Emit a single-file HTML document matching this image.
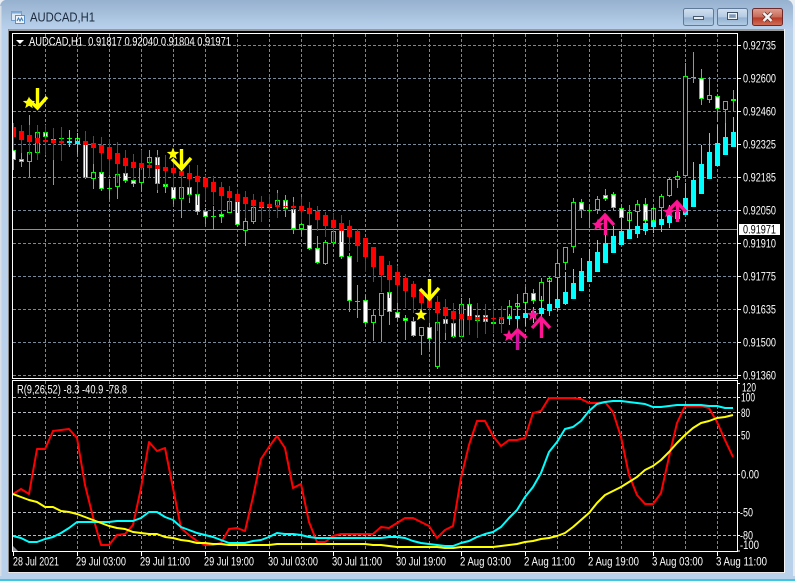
<!DOCTYPE html>
<html><head><meta charset="utf-8"><title>AUDCAD,H1</title>
<style>html,body{margin:0;padding:0;background:#b9d1ea;width:795px;height:581px;overflow:hidden}svg{display:block}text{font-family:"Liberation Sans",sans-serif;font-size:11.5px;fill:#fff;white-space:pre}</style></head>
<body>
<svg xmlns="http://www.w3.org/2000/svg" width="795" height="581" viewBox="0 0 795 581">
<defs>
<linearGradient id="tb" x1="0" y1="0" x2="0" y2="1"><stop offset="0" stop-color="#96b1cf"/><stop offset="1" stop-color="#bad2ec"/></linearGradient>
<linearGradient id="bt" x1="0" y1="0" x2="0" y2="1"><stop offset="0" stop-color="#d2e0ee"/><stop offset=".5" stop-color="#b4cbe3"/><stop offset=".55" stop-color="#93b1cf"/><stop offset="1" stop-color="#b4cde6"/></linearGradient>
<linearGradient id="cl" x1="0" y1="0" x2="0" y2="1"><stop offset="0" stop-color="#e0a090"/><stop offset=".5" stop-color="#c86a58"/><stop offset=".55" stop-color="#b83a26"/><stop offset="1" stop-color="#d0705a"/></linearGradient>
<clipPath id="mc"><rect x="13" y="34" width="724" height="344"/></clipPath>
<clipPath id="sc"><rect x="13" y="381" width="724" height="170"/></clipPath>
</defs>
<rect width="795" height="581" fill="#b9d1ea"/>
<rect width="795" height="30" fill="url(#tb)"/>
<path d="M0 0H5Q1 1 0 6Z" fill="#e8eef4"/><path d="M795 0H788Q792 1 793 6V30H795Z" fill="#e8eef4"/>
<rect x="0" y="6" width="1.5" height="570" fill="#d8dfe6"/>
<rect x="793" y="6" width="2" height="570" fill="#e4eaf0"/>
<rect x="0" y="579" width="795" height="2" fill="#3cc8e0"/>
<rect x="8" y="29" width="777" height="544" fill="#000"/>
<rect x="8" y="29" width="777" height="2" fill="#9a9a9a"/>
<rect x="8" y="29" width="1" height="544" fill="#888"/>
<rect x="8" y="572" width="777" height="1" fill="#e8e8e8"/>
<rect x="784" y="29" width="1" height="544" fill="#f2f5f8"/>

<!-- title icon -->
<rect x="11.5" y="11.5" width="10" height="9" fill="#dbe9f7" stroke="#6f9bc8"/>
<rect x="11.5" y="11.5" width="10" height="2" fill="#7fa8d4"/>
<rect x="15.5" y="15.5" width="9" height="8" fill="#eef5fc" stroke="#5c8fc4"/>
<path d="M17 21l1.5-3 1.5 3 1.5-3 1.5 3" fill="none" stroke="#3f79b8"/>
<text x="30" y="21.5" textLength="65" lengthAdjust="spacingAndGlyphs" style="font-size:13px;fill:#1b2a3d">AUDCAD,H1</text>

<!-- buttons -->
<rect x="683.5" y="8.5" width="30" height="17" rx="2" fill="url(#bt)" stroke="#5f7a99"/>
<rect x="717.5" y="8.5" width="30" height="17" rx="2" fill="url(#bt)" stroke="#5f7a99"/>
<rect x="752.5" y="8.5" width="30" height="17" rx="2" fill="url(#cl)" stroke="#6e2a2a"/>
<rect x="693.5" y="16.5" width="10" height="3" fill="#e8eef4" stroke="#47586c"/>
<rect x="727.5" y="12.5" width="10" height="7" fill="none" stroke="#3e5066" stroke-width="1"/><rect x="728.5" y="13.5" width="8" height="5" fill="none" stroke="#eef3f8" stroke-width="1"/><rect x="729.5" y="14.5" width="6" height="3" fill="#7e97b2"/>
<path d="M763.5 13l8 8M771.5 13l-8 8" stroke="#5a2a24" stroke-width="4"/><path d="M763.5 13l8 8M771.5 13l-8 8" stroke="#f2f2f2" stroke-width="2.6"/>

<!-- grid -->
<g shape-rendering="crispEdges" fill="none" stroke-width="1">
<path stroke="#778899" stroke-dasharray="3 2" d="M13 45.5H737M13 78.5H737M13 111.5H737M13 144.5H737M13 177.5H737M13 210.5H737M13 243.5H737M13 276.5H737M13 309.5H737M13 342.5H737M13 375.5H737"/>
<path stroke="#778899" stroke-dasharray="3 2" d="M45.5 34V378M77.5 34V378M109.5 34V378M141.5 34V378M173.5 34V378M205.5 34V378M237.5 34V378M269.5 34V378M301.5 34V378M333.5 34V378M365.5 34V378M397.5 34V378M429.5 34V378M461.5 34V378M493.5 34V378M525.5 34V378M557.5 34V378M589.5 34V378M621.5 34V378M653.5 34V378M685.5 34V378M717.5 34V378"/>
<path stroke="#778899" stroke-dasharray="3 2" d="M45.5 381V551M77.5 381V551M109.5 381V551M141.5 381V551M173.5 381V551M205.5 381V551M237.5 381V551M269.5 381V551M301.5 381V551M333.5 381V551M365.5 381V551M397.5 381V551M429.5 381V551M461.5 381V551M493.5 381V551M525.5 381V551M557.5 381V551M589.5 381V551M621.5 381V551M653.5 381V551M685.5 381V551M717.5 381V551"/>
<path stroke="#b4bac0" stroke-dasharray="3 2" d="M13 397.5H737M13 412.5H737M13 435.5H737M13 474.5H737M13 512.5H737M13 535.5H737"/>
<path stroke="#909090" d="M13 229.5H737"/>
</g>

<!-- candles -->
<g clip-path="url(#mc)" shape-rendering="crispEdges" fill="none">
<path stroke="#00ff00" d="M13.5 143V170M21.5 150V167M29.5 115V177M37.5 125V160M45.5 125V140M53.5 139V185M61.5 128V150M69.5 130V147M77.5 134V157M85.5 131V179M93.5 163V189M101.5 168V191M109.5 182V199M117.5 168V199M125.5 170V183M133.5 178V187M141.5 150V192M149.5 150V171M157.5 150V193M165.5 182V193M173.5 185V204M181.5 185V218M189.5 185V203M197.5 190V215M205.5 208V224M213.5 206V229M221.5 208V223M229.5 198V213M237.5 198V227M245.5 218V246M253.5 200V224M261.5 198V218M269.5 200V212M277.5 190V212M285.5 195V217M293.5 197V234M301.5 222V236M309.5 222V250M317.5 236V264M325.5 240V265M333.5 228V245M341.5 228V259M349.5 253V312M357.5 285V318M365.5 295V324M373.5 310V341M381.5 293V342M389.5 292V325M397.5 303V321M405.5 315V340M413.5 317V337M421.5 327V355M429.5 323V349M437.5 322V369M445.5 319V340M453.5 320V338M461.5 298V337M469.5 298V321M477.5 313V322M485.5 313V323M493.5 320V326M501.5 315V325M509.5 300V323M517.5 294V323M525.5 287V310M533.5 289V304M541.5 278V301M549.5 276V290M557.5 250V278M565.5 247V270M573.5 198V253M581.5 199V218M589.5 204V228M597.5 196V214M605.5 189V201M613.5 192V210M621.5 204V220M629.5 205V222M637.5 200V215M645.5 198V224M653.5 207V224M661.5 194V212M669.5 178V197M677.5 171V188M685.5 63V176M693.5 52V83M701.5 69V105M709.5 77V103M717.5 96V122M725.5 101V137M733.5 90V112"/>
<path stroke="#00ff00" d="M51 139h5M59 138h5M67 138h5M107 188h5M211 216h5M259 207h5M267 207h5M355 301h5M587 210h5M691 77h5" transform="translate(0 .5)"/>
<path stroke="#00ff00" fill="#000" d="M27.5 152.5h4v9h-4zM35.5 132.5h4v20h-4zM75.5 138.5h4v5h-4zM91.5 172.5h4v6h-4zM115.5 174.5h4v12h-4zM139.5 163.5h4v19h-4zM147.5 157.5h4v5h-4zM179.5 187.5h4v11h-4zM227.5 201.5h4v11h-4zM243.5 221.5h4v9h-4zM251.5 207.5h4v14h-4zM275.5 200.5h4v6h-4zM299.5 224.5h4v4h-4zM323.5 242.5h4v21h-4zM331.5 231.5h4v11h-4zM371.5 315.5h4v7h-4zM379.5 293.5h4v22h-4zM419.5 327.5h4v8h-4zM435.5 322.5h4v44h-4zM459.5 304.5h4v32h-4zM499.5 317.5h4v6h-4zM507.5 306.5h4v10h-4zM515.5 303.5h4v3h-4zM523.5 293.5h4v9h-4zM539.5 282.5h4v18h-4zM547.5 278.5h4v3h-4zM555.5 263.5h4v14h-4zM563.5 247.5h4v15h-4zM571.5 202.5h4v44h-4zM595.5 199.5h4v10h-4zM627.5 212.5h4v8h-4zM635.5 204.5h4v7h-4zM651.5 208.5h4v12h-4zM659.5 196.5h4v11h-4zM667.5 179.5h4v16h-4zM675.5 176.5h4v3h-4zM683.5 76.5h4v99h-4zM707.5 95.5h4v4h-4zM723.5 101.5h4v8h-4zM731.5 99.5h4v1h-4z"/>
<path stroke="#00ff00" fill="#fff" d="M11.5 150.5h4v9h-4zM19.5 159.5h4v2h-4zM43.5 132.5h4v4h-4zM83.5 143.5h4v34h-4zM99.5 172.5h4v16h-4zM123.5 173.5h4v7h-4zM131.5 180.5h4v3h-4zM155.5 157.5h4v26h-4zM163.5 184.5h4v2h-4zM171.5 187.5h4v11h-4zM187.5 187.5h4v7h-4zM195.5 194.5h4v17h-4zM203.5 211.5h4v5h-4zM219.5 214.5h4v2h-4zM235.5 201.5h4v23h-4zM283.5 200.5h4v8h-4zM291.5 209.5h4v19h-4zM307.5 225.5h4v23h-4zM315.5 248.5h4v14h-4zM339.5 230.5h4v26h-4zM347.5 256.5h4v44h-4zM363.5 300.5h4v22h-4zM387.5 292.5h4v19h-4zM395.5 312.5h4v5h-4zM403.5 318.5h4v2h-4zM411.5 321.5h4v14h-4zM427.5 327.5h4v11h-4zM443.5 319.5h4v4h-4zM451.5 323.5h4v13h-4zM467.5 304.5h4v15h-4zM475.5 315.5h4v5h-4zM483.5 315.5h4v6h-4zM491.5 322.5h4v1h-4zM531.5 293.5h4v7h-4zM579.5 202.5h4v7h-4zM603.5 195.5h4v3h-4zM611.5 194.5h4v13h-4zM619.5 208.5h4v9h-4zM643.5 204.5h4v16h-4zM699.5 78.5h4v20h-4zM715.5 96.5h4v12h-4z"/>
<path stroke="#ff0000" d="M13.5 123V150M21.5 125V153M29.5 125V155M37.5 125V160M45.5 125V155M53.5 128V160M61.5 127V161M85.5 131V178M93.5 136V164M101.5 137V174M109.5 139V175M117.5 142V183M125.5 150V176M133.5 154V180M141.5 150V170M149.5 158V178M157.5 155V190M165.5 155V186M173.5 155V190M181.5 160V200M189.5 165V198M197.5 165V205M205.5 175V200M213.5 176V205M221.5 182V212M229.5 186V210M237.5 189V213M245.5 191V218M253.5 194V220M261.5 196V222M269.5 194V218M277.5 193V218M285.5 200V210M293.5 202V213M301.5 197V223M309.5 202V225M317.5 206V231M325.5 212V237M333.5 213V243M341.5 215V242M349.5 220V251M357.5 229V262M365.5 238V272M373.5 247V282M381.5 256V292M389.5 261V298M397.5 266V303M405.5 274V308M413.5 281V313M421.5 290V317M429.5 296V323M437.5 296V331M445.5 299V333M453.5 303V337M461.5 304V337M469.5 305V335M477.5 303V338M485.5 304V334M493.5 306V333M501.5 306V333"/>
<path stroke="#ff0000" stroke-width="5" d="M13.5 127V137M21.5 131V140M29.5 135V142M37.5 138V143M45.5 140V142M53.5 140V143M61.5 141V143M85.5 141V145M93.5 143V148M101.5 145V153M109.5 147V159M117.5 153V164M125.5 158V166M133.5 162V168M141.5 163V168M149.5 165V168M157.5 165V169M165.5 167V171M173.5 168V173M181.5 171V176M189.5 173V179M197.5 176V182M205.5 178V187M213.5 182V192M221.5 187V196M229.5 191V198M237.5 194V202M245.5 197V204M253.5 200V206M261.5 202V207M269.5 204V207M277.5 205V207M285.5 206V207M293.5 206V208M301.5 206V211M309.5 208V214M317.5 211V220M325.5 215V226M333.5 220V228M341.5 223V231M349.5 226V237M357.5 231V246M365.5 238V257M373.5 247V267M381.5 256V275M389.5 265V280M397.5 272V285M405.5 278V291M413.5 284V297M421.5 290V303M429.5 296V308M437.5 302V313M445.5 307V316M453.5 311V319M461.5 314V319M469.5 316V320M477.5 317V320M485.5 317V319M493.5 318V319M501.5 317V319"/>
<path stroke="#00ffff" d="M69.5 130V147M77.5 133V152M509.5 314V325M517.5 303V330M525.5 302V326M533.5 307V323M541.5 296V323M549.5 280V316M557.5 278V311M565.5 272V305M573.5 269V299M581.5 258V291M589.5 249V282M597.5 240V272M605.5 235V263M613.5 226V253M621.5 218V245M629.5 213V239M637.5 212V238M645.5 212V235M653.5 208V233M661.5 210V232M669.5 205V228M677.5 202V219M685.5 183V215M693.5 162V207M701.5 145V194M709.5 133V179M717.5 125V166M725.5 123V155M733.5 117V147"/>
<path stroke="#00ffff" stroke-width="5" d="M69.5 141V143M77.5 141V144M509.5 317V319M517.5 316V319M525.5 313V318M533.5 311V318M541.5 308V314M549.5 304V311M557.5 299V308M565.5 292V304M573.5 283V299M581.5 271V291M589.5 261V282M597.5 252V272M605.5 243V263M613.5 236V253M621.5 231V245M629.5 229V239M637.5 226V234M645.5 223V231M653.5 221V227M661.5 219V225M669.5 215V223M677.5 212V219M685.5 198V215M693.5 180V207M701.5 164V194M709.5 152V179M717.5 143V166M725.5 137V155M733.5 132V147"/>
</g>

<!-- arrows -->
<g fill="none" stroke-linejoin="miter">
<g stroke="#ffff00" stroke-width="3.4"><path d="M37.5 88V107M28 99l9.5 9 9.5-11"/><path d="M181.5 149V169M172 159l9.5 10 9.500-11"/><path d="M429.5 279V299M420 289l9.500 10 9.500-11"/></g>
<g stroke="#ff1493" stroke-width="3.4"><path d="M517.5 331V350" stroke="#d0109f"/><path d="M510 338l7.500-8 9 8"/><path d="M541.5 319V338"/><path d="M532 328l9-10 9 10"/><path d="M605.5 216V235"/><path d="M596 225l9-10 9 10"/><path d="M677.5 203V222"/><path d="M667 212l10-10 9 10"/></g>
</g>
<g fill="#ffff00">
<polygon transform="translate(29 103)" points="0,-6.500 1.650,-2.270 6.180,-2 2.660,.87 3.820,5.260 0,2.800 -3.820,5.260 -2.660,.87 -6.180,-2 -1.650,-2.270"/>
<polygon transform="translate(173 154)" points="0,-6.500 1.650,-2.270 6.180,-2 2.660,.87 3.820,5.260 0,2.800 -3.820,5.260 -2.660,.87 -6.180,-2 -1.650,-2.270"/>
<polygon transform="translate(421 315)" points="0,-6.500 1.650,-2.270 6.180,-2 2.660,.87 3.820,5.260 0,2.800 -3.820,5.260 -2.660,.87 -6.180,-2 -1.650,-2.270"/>
</g>
<g fill="#ff1493">
<polygon transform="translate(509 336)" points="0,-6.500 1.650,-2.270 6.180,-2 2.660,.87 3.820,5.260 0,2.800 -3.820,5.260 -2.660,.87 -6.180,-2 -1.650,-2.270"/>
<polygon transform="translate(533 315)" points="0,-6.500 1.650,-2.270 6.180,-2 2.660,.87 3.820,5.260 0,2.800 -3.820,5.260 -2.660,.87 -6.180,-2 -1.650,-2.270"/>
<polygon transform="translate(598 225)" points="0,-6.500 1.650,-2.270 6.180,-2 2.660,.87 3.820,5.260 0,2.800 -3.820,5.260 -2.660,.87 -6.180,-2 -1.650,-2.270"/>
<polygon transform="translate(669 212)" points="0,-6.500 1.650,-2.270 6.180,-2 2.660,.87 3.820,5.260 0,2.800 -3.820,5.260 -2.660,.87 -6.180,-2 -1.650,-2.270"/>
</g>

<!-- indicator -->
<g clip-path="url(#sc)" fill="none" stroke-width="2" stroke-linejoin="round">
<polyline stroke="#ff0000" points="13,494 21,489 29,494 37,449 45,449 53,431 61,430 69,429 77,438 85,485 93,517 101,545 109,545 117,535 125,534 133,525 141,488 149,442 157,451 165,448 173,488 181,528 189,535 197,541 205,545 213,545 221,543 229,529 237,528 245,531 253,497 261,459 269,447 277,436 285,448 293,488 301,484 309,522 317,542 325,542 333,536 341,534 349,534 357,534 365,534 373,534 381,527 389,528 397,523 405,518 413,518 421,522 429,526 437,538 445,530 453,526 461,478 469,445 477,421 485,421 493,436 501,446 509,440 517,440 525,438 533,413 541,411 549,398 557,398 565,398 573,398 581,399 589,403 597,403 605,402 613,412 621,437 629,475 637,495 645,504 653,504 661,493 669,457 677,423 685,406 693,406 701,406 709,408 717,422 725,440 733,457"/>
<polyline stroke="#00ffff" points="13,536 21,538 29,542 37,542 45,539 53,537 61,533 69,528 77,522 85,522 93,522 101,522 109,522 117,521 125,521 133,521 141,518 149,512 157,512 165,517 173,520 181,527 189,530 197,533 205,535 213,537 221,540 229,543 237,543 245,543 253,541 261,540 269,537 277,533 285,534 293,534 301,535 309,537 317,538 325,538 333,538 341,538 349,538 357,538 365,538 373,538 381,538 389,537 397,537 405,538 413,541 421,543 429,544 437,545 445,546 453,546 461,543 469,541 477,537 485,534 493,532 501,527 509,518 517,510 525,497 533,487 541,473 549,452 557,442 565,429 573,427 581,421 589,411 597,404 605,402 613,401 621,401 629,402 637,403 645,404 653,407 661,407 669,406 677,405 685,405 693,405 701,405 709,406 717,406 725,408 733,408"/>
<polyline stroke="#ffff00" points="13,494 21,497 29,500 37,502 45,507 53,507 61,511 69,512 77,514 85,517 93,520 101,523 109,526 117,528 125,529 133,532 141,533 149,534 157,534 165,537 173,538 181,540 189,541 197,543 205,543 213,544 221,544 229,545 237,545 245,545 253,545 261,545 269,545 277,544 285,544 293,544 301,544 309,544 317,544 325,544 333,544 341,544 349,544 357,544 365,544 373,545 381,545 389,546 397,547 405,547 413,547 421,547 429,547 437,547 445,548 453,548 461,547 469,547 477,547 485,547 493,547 501,546 509,545 517,544 525,542 533,541 541,539 549,538 557,536 565,533 573,527 581,520 589,513 597,503 605,495 613,491 621,487 629,482 637,477 645,470 653,466 661,460 669,452 677,443 685,435 693,428 701,423 709,421 717,418 725,417 733,415"/>
<polygon points="13,546 18,551 13,551" fill="#8a8f96" stroke="none"/>
</g>

<!-- frames + ticks -->
<g shape-rendering="crispEdges" fill="none" stroke="#fff">
<path d="M12.500 33.500H737.500V378.500H12.500Z"/>
<path d="M12.500 380.500H737.500V551.500H12.500Z"/>
<path d="M737 45.500h4M737 78.500h4M737 111.500h4M737 144.500h4M737 177.500h4M737 210.500h4M737 243.500h4M737 276.500h4M737 309.500h4M737 342.500h4M737 375.500h4M737 383.500h3M737 397.500h3M737 412.500h3M737 435.500h3M737 474.500h3M737 512.500h3M737 535.500h3M737 551h3"/>
<path d="M13.500 551v5M77.500 551v5M141.500 551v5M205.500 551v5M269.500 551v5M333.500 551v5M397.500 551v5M461.500 551v5M525.500 551v5M589.500 551v5M653.500 551v5M717.500 551v5"/>
</g>

<!-- legends -->
<path d="M16 40h8l-4 4z" fill="#fff"/>
<text x="29" y="45.500" textLength="202" lengthAdjust="spacingAndGlyphs">AUDCAD,H1  0.91817 0.92040 0.91804 0.91971</text>
<text x="17" y="393.500" textLength="110" lengthAdjust="spacingAndGlyphs">R(9,26,52) -8.3 -40.9 -78.8</text>

<!-- price axis -->
<g>
<text x="743" y="49.500" textLength="33" lengthAdjust="spacingAndGlyphs">0.92735</text>
<text x="743" y="82.500" textLength="33" lengthAdjust="spacingAndGlyphs">0.92600</text>
<text x="743" y="115.500" textLength="33" lengthAdjust="spacingAndGlyphs">0.92460</text>
<text x="743" y="148.500" textLength="33" lengthAdjust="spacingAndGlyphs">0.92325</text>
<text x="743" y="181.500" textLength="33" lengthAdjust="spacingAndGlyphs">0.92185</text>
<text x="743" y="214.500" textLength="33" lengthAdjust="spacingAndGlyphs">0.92050</text>
<text x="743" y="247.500" textLength="33" lengthAdjust="spacingAndGlyphs">0.91910</text>
<text x="743" y="280.500" textLength="33" lengthAdjust="spacingAndGlyphs">0.91775</text>
<text x="743" y="313.500" textLength="33" lengthAdjust="spacingAndGlyphs">0.91635</text>
<text x="743" y="346.500" textLength="33" lengthAdjust="spacingAndGlyphs">0.91500</text>
<text x="743" y="379.500" textLength="33" lengthAdjust="spacingAndGlyphs">0.91360</text>
<rect x="739" y="224" width="41" height="11" fill="#fff"/>
<text x="743" y="233.500" textLength="33" lengthAdjust="spacingAndGlyphs" style="fill:#000">0.91971</text>
<text x="742" y="391.500" textLength="14" lengthAdjust="spacingAndGlyphs">120</text>
<text x="741" y="401.500" textLength="14" lengthAdjust="spacingAndGlyphs">100</text>
<text x="741" y="417" textLength="9" lengthAdjust="spacingAndGlyphs">80</text>
<text x="741" y="439.500" textLength="9" lengthAdjust="spacingAndGlyphs">50</text>
<text x="741" y="478.500" textLength="18" lengthAdjust="spacingAndGlyphs">0.00</text>
<text x="740" y="516.500" textLength="13" lengthAdjust="spacingAndGlyphs">-50</text>
<text x="740" y="539.500" textLength="13" lengthAdjust="spacingAndGlyphs">-80</text>
<text x="740" y="549" textLength="19" lengthAdjust="spacingAndGlyphs">-100</text>
</g>

<!-- time axis -->
<g>
<text x="13" y="565.500" textLength="46" lengthAdjust="spacingAndGlyphs">28 Jul 2021</text>
<text x="76" y="565.500" textLength="50" lengthAdjust="spacingAndGlyphs">29 Jul 03:00</text>
<text x="140" y="565.500" textLength="50" lengthAdjust="spacingAndGlyphs">29 Jul 11:00</text>
<text x="204" y="565.500" textLength="50" lengthAdjust="spacingAndGlyphs">29 Jul 19:00</text>
<text x="268" y="565.500" textLength="50" lengthAdjust="spacingAndGlyphs">30 Jul 03:00</text>
<text x="332" y="565.500" textLength="50" lengthAdjust="spacingAndGlyphs">30 Jul 11:00</text>
<text x="396" y="565.500" textLength="50" lengthAdjust="spacingAndGlyphs">30 Jul 19:00</text>
<text x="460" y="565.500" textLength="51" lengthAdjust="spacingAndGlyphs">2 Aug 03:00</text>
<text x="524" y="565.500" textLength="51" lengthAdjust="spacingAndGlyphs">2 Aug 11:00</text>
<text x="588" y="565.500" textLength="51" lengthAdjust="spacingAndGlyphs">2 Aug 19:00</text>
<text x="652" y="565.500" textLength="51" lengthAdjust="spacingAndGlyphs">3 Aug 03:00</text>
<text x="716" y="565.500" textLength="51" lengthAdjust="spacingAndGlyphs">3 Aug 11:00</text>
</g>
</svg>
</body></html>
